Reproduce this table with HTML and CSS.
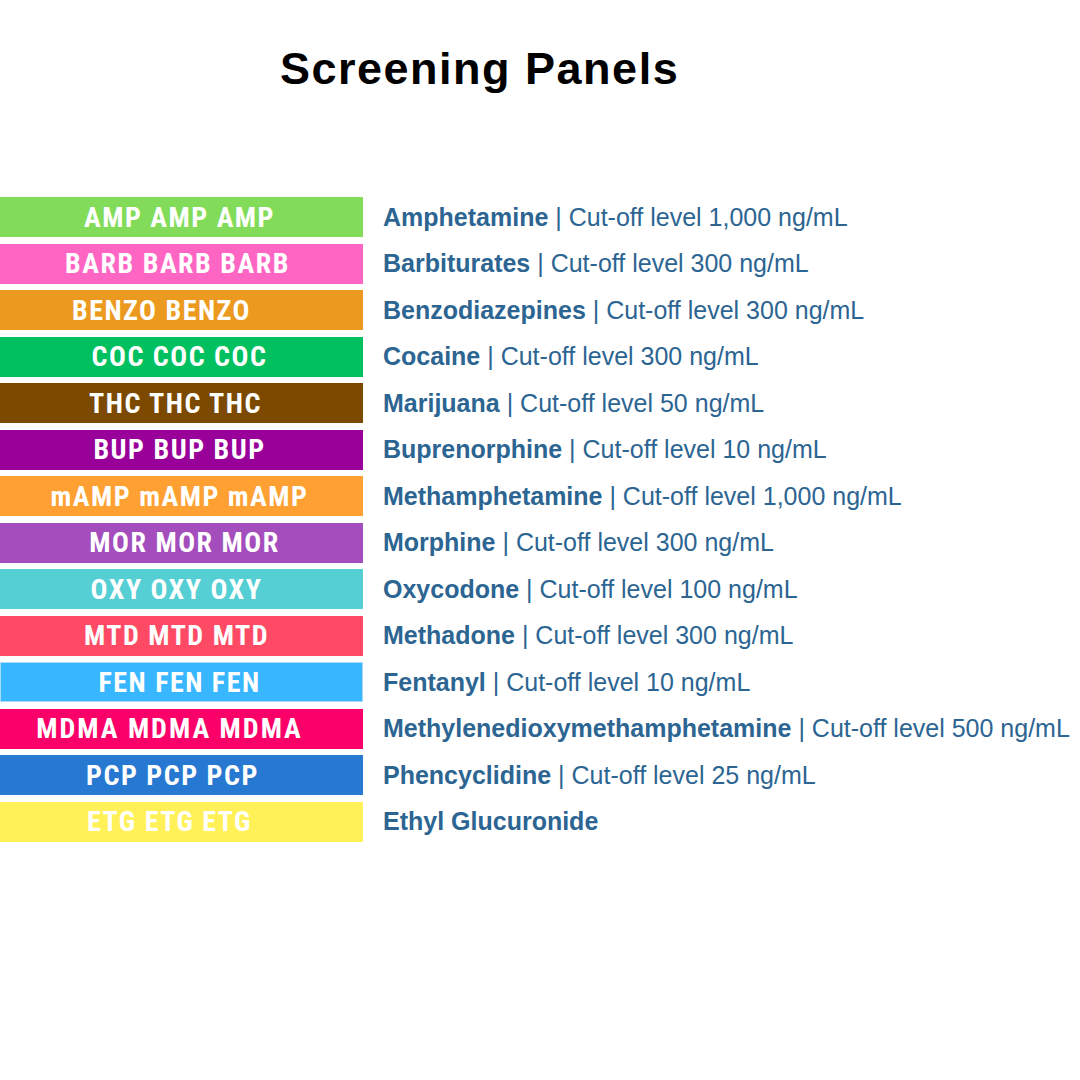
FILE: index.html
```html
<!DOCTYPE html>
<html>
<head>
<meta charset="utf-8">
<link rel="stylesheet" href="styles.css">
</head>
<body>
<h1 class="title">Screening Panels</h1>
<ul class="panels">
  <li class="row"><span class="tag amp">AMP AMP AMP</span><span class="desc"><b>Amphetamine</b> | Cut-off level 1,000 ng/mL</span></li>
  <li class="row"><span class="tag barb">BARB BARB BARB</span><span class="desc"><b>Barbiturates</b> | Cut-off level 300 ng/mL</span></li>
  <li class="row"><span class="tag benzo">BENZO BENZO</span><span class="desc"><b>Benzodiazepines</b> | Cut-off level 300 ng/mL</span></li>
  <li class="row"><span class="tag coc">COC COC COC</span><span class="desc"><b>Cocaine</b> | Cut-off level 300 ng/mL</span></li>
  <li class="row"><span class="tag thc">THC THC THC</span><span class="desc"><b>Marijuana</b> | Cut-off level 50 ng/mL</span></li>
  <li class="row"><span class="tag bup">BUP BUP BUP</span><span class="desc"><b>Buprenorphine</b> | Cut-off level 10 ng/mL</span></li>
  <li class="row"><span class="tag mamp">mAMP mAMP mAMP</span><span class="desc"><b>Methamphetamine</b> | Cut-off level 1,000 ng/mL</span></li>
  <li class="row"><span class="tag mor">MOR MOR MOR</span><span class="desc"><b>Morphine</b> | Cut-off level 300 ng/mL</span></li>
  <li class="row"><span class="tag oxy">OXY OXY OXY</span><span class="desc"><b>Oxycodone</b> | Cut-off level 100 ng/mL</span></li>
  <li class="row"><span class="tag mtd">MTD MTD MTD</span><span class="desc"><b>Methadone</b> | Cut-off level 300 ng/mL</span></li>
  <li class="row"><span class="tag fen">FEN FEN FEN</span><span class="desc"><b>Fentanyl</b> | Cut-off level 10 ng/mL</span></li>
  <li class="row"><span class="tag mdma">MDMA MDMA MDMA</span><span class="desc"><b>Methylenedioxymethamphetamine</b> | Cut-off level 500 ng/mL</span></li>
  <li class="row"><span class="tag pcp">PCP PCP PCP</span><span class="desc"><b>Phencyclidine</b> | Cut-off level 25 ng/mL</span></li>
  <li class="row"><span class="tag etg">ETG ETG ETG</span><span class="desc"><b>Ethyl Glucuronide</b></span></li>
</ul>
</body>
</html>
```
FILE: styles.css
```css
html, body {
  margin: 0;
  padding: 0;
  background: #ffffff;
}
body {
  width: 1080px;
  height: 1080px;
  font-family: "Liberation Sans", Arial, sans-serif;
}
.title {
  margin: 0;
  padding: 39px 0 0 280px;
  font-size: 45px;
  line-height: 60px;
  font-weight: 700;
  letter-spacing: 1.5px;
  color: #000000;
}
.panels {
  list-style: none;
  margin: 98px 0 0 0;
  padding: 0;
  display: flex;
  flex-direction: column;
  gap: 6.5px;
}
.row {
  display: flex;
  align-items: center;
  height: 40px;
}
.tag {
  box-sizing: border-box;
  width: 363px;
  height: 40px;
  padding-right: 4px;
  flex: none;
  display: flex;
  align-items: center;
  justify-content: center;
  color: #ffffff;
  font-family: Roboto, "Liberation Sans", sans-serif;
  font-weight: 700;
  font-size: 28px;
  font-stretch: 75%;
  letter-spacing: 1.5px;
  white-space: nowrap;
}
.desc {
  padding-left: 20px;
  font-size: 25px;
  color: #2c6592;
  white-space: nowrap;
}
.desc b {
  font-weight: 700;
}
.amp { background: #82dc5a; }
.barb { background: #ff66c4; padding-right: 8px; }
.benzo { background: #eb9a1f; justify-content: flex-start; padding-left: 72px; }
.coc { background: #00c060; }
.thc { background: #7b4a00; padding-right: 12px; }
.bup { background: #990099; }
.mamp { background: #ffa033; }
.mor { background: #a44dbd; padding-right: 0; padding-left: 6px; }
.oxy { background: #55cfd4; padding-right: 10px; }
.mtd { background: #ff4a66; padding-right: 10px; }
.fen { background: #38b6ff; border: 1px solid #a8dcfb; }
.mdma { background: #fa0068; padding-right: 24px; letter-spacing: 2px; }
.pcp { background: #2778d0; padding-right: 18px; }
.etg { background: #fff157; padding-right: 24px; }
```
